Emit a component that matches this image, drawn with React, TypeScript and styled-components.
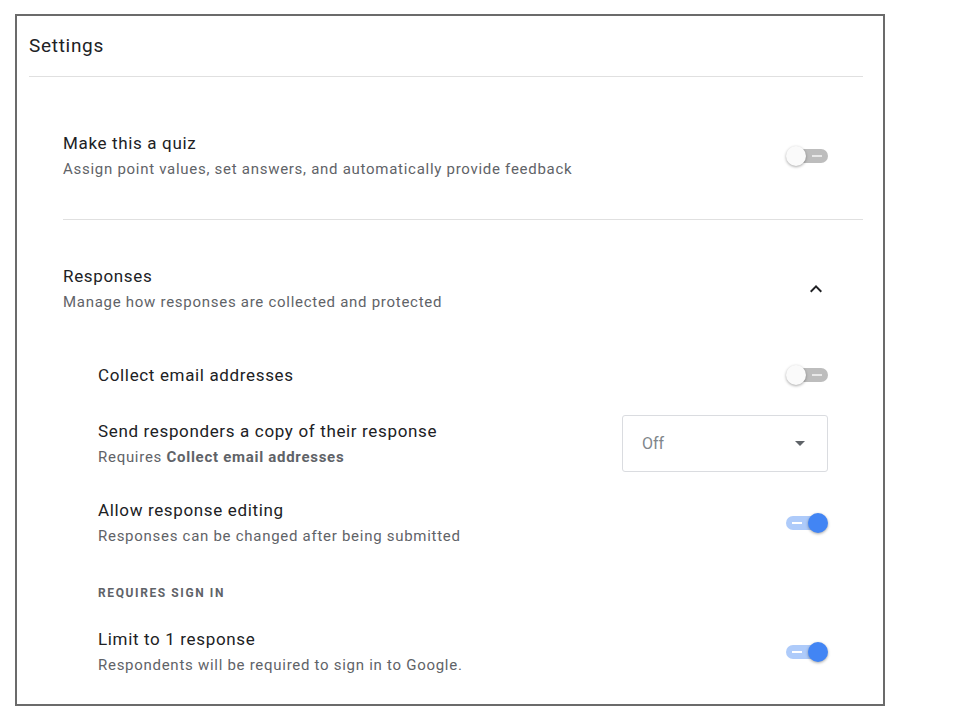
import React from "react";
import styled, { createGlobalStyle } from "styled-components";

const Global = createGlobalStyle`
  body { margin: 0; font-family: Roboto, "Liberation Sans", Arial, sans-serif; background: #fff; }
`;

const Frame = styled.div`
  margin: 14px 0 0 15px;
  width: 854px;
  height: 688px;
  border: 2px solid #6b6b6b;
  padding-left: 12px;
  box-sizing: content-box;
  overflow: hidden;
`;
const Header = styled.div`
  height: 61px;
  border-bottom: 1px solid #e0e0e0;
  width: 834px;
  font-size: 19px;
  letter-spacing: 0.7px;
  color: #202124;
  display: flex;
  align-items: center;
  padding-top: 1px;
  box-sizing: border-box;
  padding-bottom: 2px;
`;
const Section = styled.div<{ $pt: number; $pb: number; $border?: boolean }>`
  margin-left: 34px;
  width: 800px;
  padding: ${(p) => p.$pt}px 35px ${(p) => p.$pb}px 0;
  box-sizing: border-box;
  border-bottom: ${(p) => (p.$border ? "1px solid #e0e0e0" : "none")};
`;
const Row = styled.div<{ $mt: number; $indent?: boolean }>`
  display: flex;
  align-items: center;
  justify-content: space-between;
  margin-top: ${(p) => p.$mt}px;
  padding-left: ${(p) => (p.$indent ? 35 : 0)}px;
`;
const Texts = styled.div`
  display: flex;
  flex-direction: column;
`;
const Title = styled.div`
  font-size: 17px;
  letter-spacing: 0.65px;
  line-height: 22px;
  color: #202124;
`;
const Sub = styled.div`
  font-size: 15px;
  letter-spacing: 0.72px;
  line-height: 20px;
  margin-top: 5px;
  color: #5f6368;
  b { font-weight: 700; color: #5f6368; }
`;
const Caption = styled.div<{ $mt: number }>`
  margin-top: ${(p) => p.$mt}px;
  padding-left: 35px;
  font-size: 12px;
  line-height: 16px;
  font-weight: 700;
  letter-spacing: 1.6px;
  color: #5f6368;
`;
const Track = styled.div<{ $on?: boolean }>`
  position: relative;
  width: 36px;
  height: 14px;
  border-radius: 7px;
  margin-right: ${(p) => (p.$on ? 6 : 0)}px;
  background: ${(p) => (p.$on ? "#aecbfa" : "#bdbdbd")};
  &::before {
    content: "";
    position: absolute;
    top: 6px;
    ${(p) => (p.$on ? "left: 6px;" : "right: 6px;")}
    width: 10px;
    height: 2px;
    background: ${(p) => (p.$on ? "#fff" : "#e8e8e8")};
  }
`;
const Thumb = styled.div<{ $on?: boolean }>`
  position: absolute;
  top: -3px;
  ${(p) => (p.$on ? "right: -6px;" : "left: -6px;")}
  width: 20px;
  height: 20px;
  border-radius: 50%;
  background: ${(p) => (p.$on ? "#4285f4" : "#fafafa")};
  box-shadow: 0 1px 3px rgba(0,0,0,0.35);
`;
const Toggle = ({ on }: { on?: boolean }) => (
  <Track $on={on}>
    <Thumb $on={on} />
  </Track>
);
const Select = styled.div`
  width: 206px;
  height: 57px;
  border: 1px solid #dadce0;
  border-radius: 3px;
  box-sizing: border-box;
  display: flex;
  align-items: center;
  justify-content: space-between;
  padding: 0 22px 0 19px;
  font-size: 16px;
  color: #80868b;
`;

export default function App() {
  return (
    <>
      <Global />
      <Frame>
        <Header>Settings</Header>
        <Section $pt={55} $pb={40} $border>
          <Row $mt={0}>
            <Texts>
              <Title>Make this a quiz</Title>
              <Sub>Assign point values, set answers, and automatically provide feedback</Sub>
            </Texts>
            <Toggle />
          </Row>
        </Section>
        <Section $pt={45} $pb={0}>
          <Row $mt={0}>
            <Texts>
              <Title>Responses</Title>
              <Sub>Manage how responses are collected and protected</Sub>
            </Texts>
            <svg width="24" height="24" viewBox="0 0 24 24">
              <path d="M7.41 15.41 12 10.83l4.59 4.58L18 14l-6-6-6 6z" fill="#202124" />
            </svg>
          </Row>
          <Row $mt={52} $indent>
            <Title>Collect email addresses</Title>
            <Toggle />
          </Row>
          <Row $mt={29} $indent>
            <Texts>
              <Title>Send responders a copy of their response</Title>
              <Sub>Requires <b>Collect email addresses</b></Sub>
            </Texts>
            <Select>
              <span>Off</span>
              <svg width="10" height="5" viewBox="0 0 10 5"><path d="M0 0h10L5 5z" fill="#5f6368" /></svg>
            </Select>
          </Row>
          <Row $mt={27} $indent>
            <Texts>
              <Title>Allow response editing</Title>
              <Sub>Responses can be changed after being submitted</Sub>
            </Texts>
            <Toggle on />
          </Row>
          <Caption $mt={39}>REQUIRES SIGN IN</Caption>
          <Row $mt={27} $indent>
            <Texts>
              <Title>Limit to 1 response</Title>
              <Sub>Respondents will be required to sign in to Google.</Sub>
            </Texts>
            <Toggle on />
          </Row>
        </Section>
      </Frame>
    </>
  );
}
